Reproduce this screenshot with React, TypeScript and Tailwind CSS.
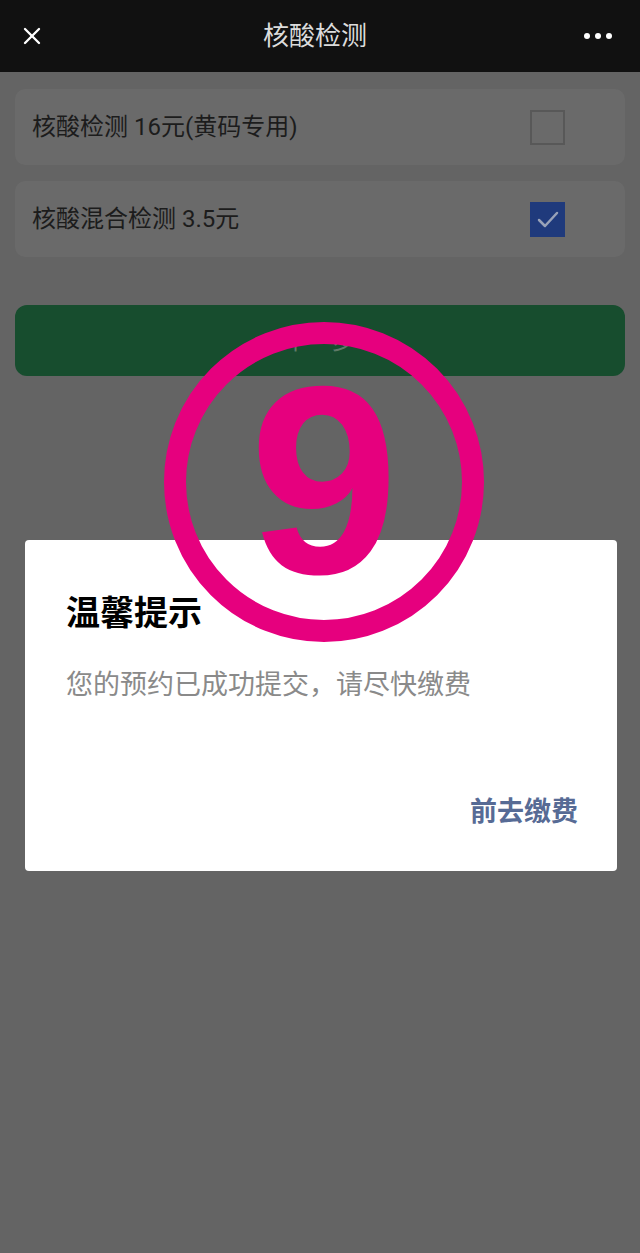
import { X } from 'lucide-react';

const font = { fontFamily: 'Roboto, "Noto Sans CJK SC", sans-serif' };

function Option({ label, checked }: { label: string; checked: boolean }) {
  return (
    <div className="flex items-center justify-between h-[76px] rounded-[10px] bg-[#6a6a6a] pl-[17px] pr-[60px]">
      <span className="text-[24px] text-[#1c1c1c]">{label}</span>
      {checked ? (
        <div className="w-[35px] h-[35px] bg-[#1f3a7c] flex items-center justify-center">
          <svg width="24" height="24" viewBox="0 0 24 24" fill="none">
            <path d="M3 13 L9 19 L21 6" stroke="#98a2b8" strokeWidth="2.5" strokeLinecap="round" strokeLinejoin="round" />
          </svg>
        </div>
      ) : (
        <div className="w-[35px] h-[35px] border-2 border-[#585858]" />
      )}
    </div>
  );
}

export default function App() {
  return (
    <div className="relative h-[1253px] bg-[#646464] overflow-hidden" style={font}>
      {/* nav bar */}
      <div className="h-[72px] bg-[#111111] flex items-center justify-between px-[18px]">
        <X className="w-[28px] h-[28px] text-white" strokeWidth={2} />
        <span className="text-[26px] text-[#dcdcdc]">核酸检测</span>
        <div className="flex items-center gap-[5px] pr-[10px]">
          <span className="w-[6px] h-[6px] rounded-full bg-white" />
          <span className="w-[6px] h-[6px] rounded-full bg-white" />
          <span className="w-[6px] h-[6px] rounded-full bg-white" />
        </div>
      </div>

      <div className="px-[15px] pt-[17px] flex flex-col gap-[16px]">
        <Option label="核酸检测 16元(黄码专用)" checked={false} />
        <Option label="核酸混合检测 3.5元" checked />
        <button className="mt-[32px] h-[71px] rounded-[12px] bg-[#174d2e] text-[24px] text-[#5f7a68]">
          下一步
        </button>
      </div>

      {/* dialog */}
      <div className="absolute top-[540px] left-[25px] w-[592px] h-[331px] bg-white rounded-[4px] flex flex-col pl-[41px] pr-[39px]">
        <h2 className="mt-[53px] text-[34px] font-bold leading-[40px] text-black">温馨提示</h2>
        <p className="mt-[35px] text-[27px] leading-[34px] text-[#8a8a8a]">您的预约已成功提交，请尽快缴费</p>
        <div className="mt-auto mb-[41px] flex justify-end">
          <span className="text-[27px] leading-[36px] font-bold text-[#576b95]">前去缴费</span>
        </div>
      </div>

      {/* step annotation */}
      <div className="absolute left-[164px] top-[322px] w-[320px] h-[320px] flex items-center justify-center">
        <svg className="absolute inset-0" width="320" height="320" viewBox="0 0 320 320">
          <circle cx="160" cy="160" r="149" fill="none" stroke="#e6007e" strokeWidth="22" />
        </svg>
        <span
          className="relative text-[268px] leading-none font-bold text-[#e6007e] -mt-[4px]"
          style={{ fontFamily: '"Liberation Sans", Arial, sans-serif' }}
        >
          9
        </span>
      </div>
    </div>
  );
}
